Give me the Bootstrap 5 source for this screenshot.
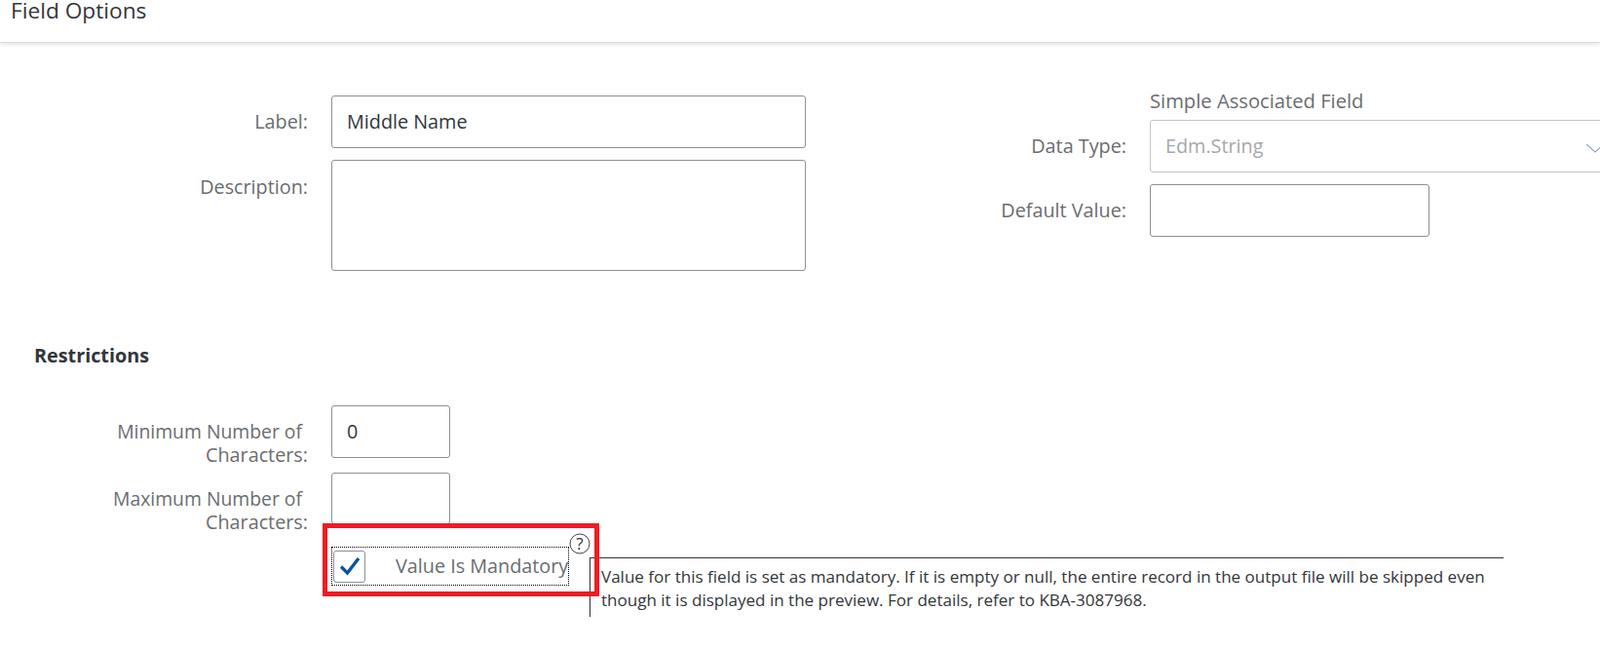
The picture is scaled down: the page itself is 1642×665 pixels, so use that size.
<!DOCTYPE html>
<html lang="en">

<head>
    <link href="https://cdn.jsdelivr.net/npm/bootstrap@5.3.0/dist/css/bootstrap.min.css" rel="stylesheet">
    <meta charset="UTF-8" />
    <title>Field Options</title>
    <style>
        html, body { height: 665px; overflow: hidden; }
        body { font-family: "Open Sans", "Liberation Sans", sans-serif; font-size: 19.8px; color: #32363a; }
        .page-head { height: 44px; padding-left: 11px; font-size: 22.7px; line-height: 22px; border-bottom: 1px solid #d9d9d9; box-shadow: 0 2px 4px rgba(0, 0, 0, .1); }
        .page-body { padding-top: 50px; }
        .top-forms { width: 1700px; }
        .left-form { width: 827px; padding-top: 4px; }
        .right-form { margin-left: 73px; }
        .field-row { margin-bottom: 12px; }
        .field-label { width: 316px; margin-right: 24px; flex-shrink: 0; text-align: right; color: #6a6d70; line-height: 24px; }
        .right-form .field-label { width: 256px; }
        .field-hint { margin-left: 280px; height: 21px; font-size: 20.2px; line-height: 19px; margin-bottom: 8px; color: #6a6d70; }
        .form-control.sap-input, .form-select.sap-input { height: 54px; border: 1px solid #89919a; border-radius: 3px; padding: 0 15px 2px; font-size: 19.8px; color: #32363a; background-image: none; box-shadow: none; }
        .form-control.sap-area { height: 114px; resize: none; }
        .form-select.sap-input:disabled { width: 490px; padding-bottom: 0; border-color: #c0c5ca; background-color: #fff; color: #a5a8ab; opacity: 1; }
        .select-wrap { width: 490px; }
        .select-arrow { position: absolute; left: 447px; top: 24px; }
        .input-md { width: 287px; }
        .input-sm { width: 122px; }
        .section-title { margin: 63px 0 39px 35px; font-weight: 700; line-height: 24px; }
        .label-lines { line-height: 24px; padding-top: 15px; }
        .label-lines span { padding-right: 6px; font-size: 19.35px; }
        .min-row { margin-bottom: 6px; }
        .max-input { height: 53px !important; }
        .mandatory-box { width: 284px; height: 75px; margin: -11px 0 0 331px; border: 5px solid #ee1c25; position: relative; }
        .check-area { width: 244px; height: 40px; margin: 19px 0 0 4px; border: 1px dotted #000; padding-left: 1px; color: #6a6d70; }
        .check-mark { width: 33px; height: 33px; margin-right: 31px; border: 1px solid #89919a; border-radius: 3px; flex-shrink: 0; }
        .check-text { white-space: nowrap; }
        .help-mark { position: absolute; left: 248px; top: 5px; }
        .field-tip { position: absolute; left: 269px; top: 30px; z-index: -1; width: 938px; height: 61px; padding: 7px 0 0 11px; border-top: 1px solid #333; border-left: 1px solid #333; font-size: 17.05px; line-height: 24px; color: #32363a; }
    </style>
</head>

<body>
    <header class="page-head d-flex align-items-start">Field Options</header>

    <main class="page-body">
        <div class="top-forms d-flex">
            <div class="left-form">
                <div class="field-row d-flex align-items-center">
                    <label class="field-label" for="label">Label:</label>
                    <input id="label" type="text" class="form-control sap-input" value="Middle Name">
                </div>
                <div class="field-row d-flex">
                    <label class="field-label pt-3" for="description">Description:</label>
                    <textarea id="description" class="form-control sap-input sap-area"></textarea>
                </div>
            </div>
            <div class="right-form">
                <div class="field-hint">Simple Associated Field</div>
                <div class="field-row d-flex align-items-center">
                    <label class="field-label" for="type">Data Type:</label>
                    <div class="select-wrap position-relative">
                        <select id="type" class="form-select sap-input" disabled>
                            <option>Edm.String</option>
                        </select>
                        <svg class="select-arrow" width="20" height="10" viewBox="0 0 20 10">
                            <path d="M1 1l9 8 9-8" fill="none" stroke="#8fa9c4" stroke-width="1.2" />
                        </svg>
                    </div>
                </div>
                <div class="field-row d-flex align-items-center">
                    <label class="field-label" for="default">Default Value:</label>
                    <input id="default" type="text" class="form-control sap-input input-md">
                </div>
            </div>
        </div>

        <div class="section-title">Restrictions</div>

        <div class="min-row d-flex">
            <label class="field-label label-lines" for="min"><span>Minimum Number of</span><br>Characters:</label>
            <input id="min" type="text" class="form-control sap-input input-sm" value="0">
        </div>
        <div class="d-flex">
            <label class="field-label label-lines" for="max"><span>Maximum Number of</span><br>Characters:</label>
            <input id="max" type="text" class="form-control sap-input input-sm max-input">
        </div>

        <div class="mandatory-box">
            <div class="check-area d-flex align-items-center">
                <div class="check-mark d-flex align-items-center justify-content-center">
                    <svg width="22" height="20" viewBox="0 0 22 20">
                        <path d="M2 10.5l6.5 6.5L20 2" fill="none" stroke="#0854a0" stroke-width="3.4" />
                    </svg>
                </div>
                <span class="check-text">Value Is Mandatory</span>
            </div>
            <svg class="help-mark" width="22" height="22" viewBox="0 0 22 22">
                <circle cx="11" cy="11" r="10" fill="#fff" stroke="#444" stroke-width="1" />
                <text x="11" y="17" text-anchor="middle" font-family="Open Sans, sans-serif" font-size="17" fill="#333">?</text>
            </svg>
            <div class="field-tip">Value for this field is set as mandatory. If it is empty or null, the entire record in the output file will be skipped even though it is displayed in the preview. For details, refer to KBA-3087968.</div>
        </div>
    </main>

    <script src="https://cdn.jsdelivr.net/npm/bootstrap@5.3.0/dist/js/bootstrap.bundle.min.js"></script>
</body>

</html>
